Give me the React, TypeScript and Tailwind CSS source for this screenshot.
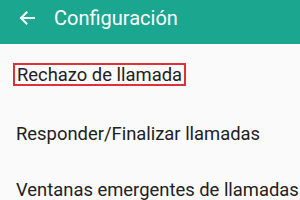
const items = ['Responder/Finalizar llamadas', 'Ventanas emergentes de llamadas']

export default function App() {
  return (
    <div className="w-[300px] h-[200px] overflow-hidden bg-[#fafafa] font-['Roboto',sans-serif]">
      <header className="h-[44px] bg-[#1ba68f] flex items-center pl-[19px] pb-[8px] text-white">
        <svg width="16" height="14" viewBox="0 0 16 14" fill="none" stroke="currentColor" strokeWidth="2" strokeLinecap="square">
          <path d="M2 7h13M7.5 1.5 2 7l5.5 5.5" />
        </svg>
        <span className="ml-[19px] text-[20px] leading-none">Configuración</span>
      </header>
      <div className="pt-[19px] pl-[13px]">
        <span className="inline-block border-2 border-[#e0303c] px-[2px] text-[18.4px] leading-[19px] text-[#212121]">
          Rechazo de llamada
        </span>
      </div>
      {items.map((item) => (
        <div key={item} className="pl-[16px] pt-[35px] text-[18.4px] leading-[21px] text-[#212121] whitespace-nowrap">
          {item}
        </div>
      ))}
    </div>
  )
}
